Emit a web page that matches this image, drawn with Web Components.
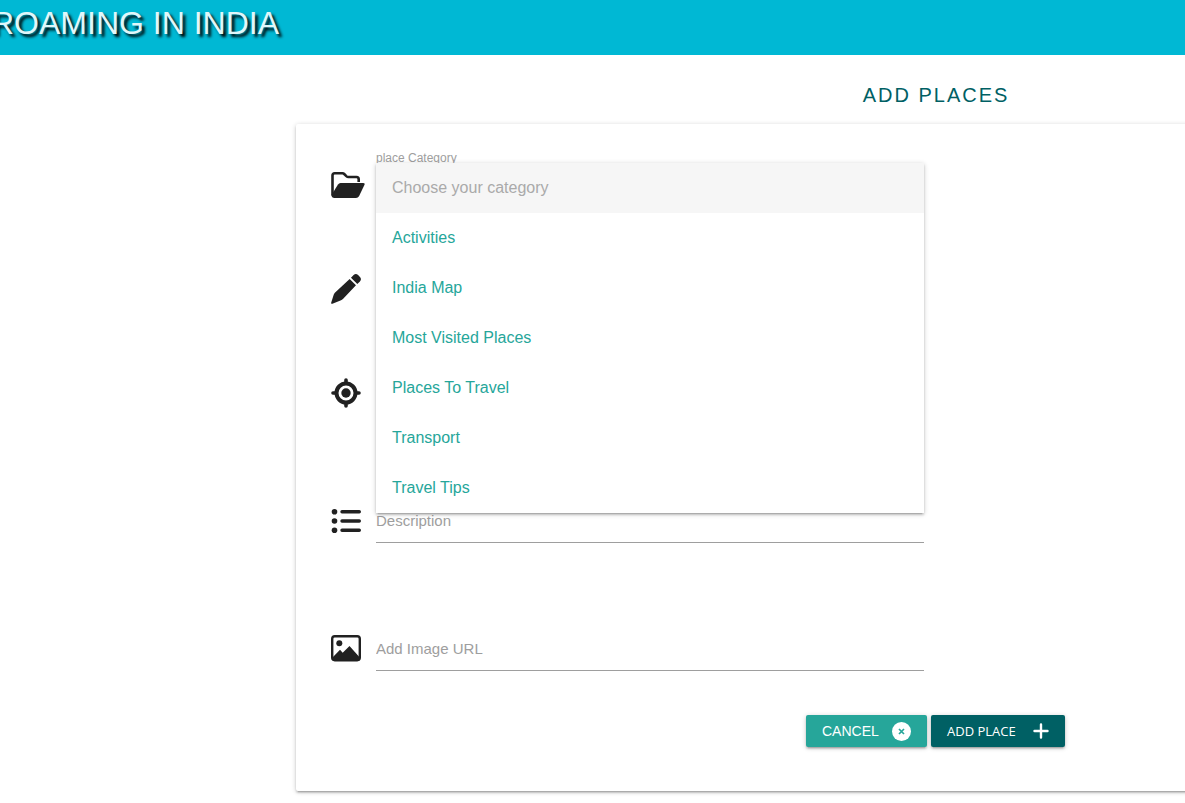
<!DOCTYPE html>
<html lang="en">
<head>
<meta charset="utf-8">
<meta name="viewport" content="width=device-width, initial-scale=1">
<title>Roaming in India - Add Places</title>
<style>
html{height:100%}
body{margin:0;min-height:100%;background:#fff;color:#212121;font-family:"Liberation Sans",Arial,sans-serif;overflow-x:hidden}
</style>
</head>
<body>
<site-header>ROAMING IN INDIA</site-header>
<place-page>
  <span slot="title">ADD PLACES</span>
  <category-field label="place Category"></category-field>
  <form-field icon="pencil" name="Place name"></form-field>
  <form-field icon="target" name="Location" class="wide"></form-field>
  <form-field icon="list" name="Description" label="Description" class="wide"></form-field>
  <form-field icon="image" name="Add Image URL" label="Add Image URL"></form-field>
  <form-actions></form-actions>
</place-page>
<script>
const icons = {
  folder: '<svg width="34" height="30" viewBox="0 0 34 30"><path d="M1.500 25.500V5.500Q1.500 3.300 3.700 3.300H11.500Q12.500 3.300 13.200 4L15.300 6.100Q16.300 7 17.500 7H25.500Q27.700 7 27.700 9.200V12" fill="none" stroke="currentColor" stroke-width="2.600"/><path d="M0.500 25L7 14.500Q8 13 9.500 13H32Q34.300 13 33.500 14.800L28 26.200Q27 28 25 28H3.500Q0.500 28 0.500 25Z" fill="currentColor"/></svg>',
  pencil: '<svg width="30" height="30" viewBox="0 0 512 512"><path fill="currentColor" d="M386 18Q424-16 462 18L494 50Q528 88 494 126L449 171L341 63ZM318 86L426 194L208 424Q190 442 162 451L24 506Q-2 516 4 488L46 352Q52 334 66 320Z"/></svg>',
  target: '<svg width="30" height="30" viewBox="0 0 30 30"><g fill="none" stroke="currentColor"><circle cx="15" cy="15" r="9.500" stroke-width="4"/><path stroke-width="3.600" stroke-linecap="round" d="M15 2V5M15 25V28M2 15H5M25 15H28"/></g><circle cx="15" cy="15" r="4.700" fill="currentColor"/></svg>',
  list: '<svg width="30" height="30" viewBox="0 0 30 30"><g fill="currentColor"><circle cx="3.500" cy="5.700" r="2.800"/><circle cx="3.500" cy="15" r="2.800"/><circle cx="3.500" cy="24.300" r="2.800"/></g><path stroke="currentColor" stroke-width="3.400" stroke-linecap="round" d="M11 5.700H28.300M11 15H28.300M11 24.300H28.300"/></svg>',
  image: '<svg width="30" height="30" viewBox="0 0 30 30"><rect x="1.200" y="2.200" width="27.600" height="24" rx="2.600" fill="none" stroke="currentColor" stroke-width="2.400"/><circle cx="8.300" cy="9.300" r="3" fill="currentColor"/><path d="M1.500 23.500L9 15.700L11.700 18.700L18.500 12L28.800 23.500V26.500H1.500Z" fill="currentColor"/></svg>'
};
const row = `
  :host{display:block;position:relative;margin-bottom:60px}
  :host(.wide){margin-bottom:84px}
  .row{display:grid;grid-template-columns:45px minmax(0,548px);height:44px;align-items:center}
  .icon svg{display:block}
`;
function mount(el, html){ el.attachShadow({mode:'open'}).innerHTML = html; }

customElements.define('site-header', class extends HTMLElement {
  connectedCallback(){ mount(this, `<style>
    :host{display:block;background:#00b8d4;height:55px;overflow:hidden}
    h1{margin:0 0 0 -9px;font-size:32px;line-height:46px;font-weight:400;color:#e0f7fa;text-shadow:3px 3px 3px #000;white-space:nowrap}
  </style><header><h1><slot></slot></h1></header>`); }
});

customElements.define('place-page', class extends HTMLElement {
  connectedCallback(){ mount(this, `<style>
    :host{display:block;margin:0 -33% 0 296px;padding-bottom:8px}
    h2{margin:0;padding:24px 0 13px;font-size:20px;line-height:32px;font-weight:400;letter-spacing:2px;text-align:center;color:#006064}
    form{display:block;box-sizing:border-box;padding:39px 35px 44px;border-radius:2px;background:#fff;
      box-shadow:0 2px 2px 0 rgba(0,0,0,.14),0 3px 1px -2px rgba(0,0,0,.12),0 1px 5px 0 rgba(0,0,0,.2)}
  </style><main><h2><slot name="title"></slot></h2><form><slot></slot></form></main>`); }
});

customElements.define('form-field', class extends HTMLElement {
  connectedCallback(){
    const label = this.getAttribute('label') || '';
    mount(this, `<style>${row}
    input{box-sizing:border-box;width:100%;height:44px;margin:0;padding:0;border:0;border-bottom:1px solid #9e9e9e;border-radius:0;outline:0;background:none;font:15px "Liberation Sans",Arial,sans-serif;color:#212121}
    input::placeholder{color:#9e9e9e;opacity:1}
  </style><div class="row"><span class="icon">${icons[this.getAttribute('icon')]}</span><input type="text" aria-label="${this.getAttribute('name')}" placeholder="${label}"></div>`); }
});

customElements.define('category-field', class extends HTMLElement {
  connectedCallback(){ mount(this, `<style>${row}
    :host{z-index:2}
    .box{position:relative;align-self:start}
    label{position:absolute;left:0;top:-13px;font-size:12px;line-height:16px;color:#9e9e9e}
    select{position:absolute;left:0;top:0;box-sizing:border-box;width:100%;height:350px;margin:0;padding:0;border:0;border-radius:0;outline:0;overflow:hidden;background:#fff;color:#26a69a;font:16px "Liberation Sans",Arial,sans-serif;
      box-shadow:0 2px 2px 0 rgba(0,0,0,.14),0 3px 1px -2px rgba(0,0,0,.12),0 1px 5px 0 rgba(0,0,0,.2)}
    option{box-sizing:border-box;height:50px;padding:16px;line-height:18px}
    option:disabled{background:#f6f6f6;color:#aaa}
  </style><div class="row"><span class="icon">${icons.folder}</span><div class="box">
    <label for="category">${this.getAttribute('label')}</label>
    <select id="category" size="7">
      <option disabled>Choose your category</option>
      <option>Activities</option><option>India Map</option><option>Most Visited Places</option>
      <option>Places To Travel</option><option>Transport</option><option>Travel Tips</option>
    </select></div></div>`); }
});

customElements.define('form-actions', class extends HTMLElement {
  connectedCallback(){ mount(this, `<style>
    :host{display:flex;gap:4px;margin-top:-16px;padding-left:475px}
    button{display:flex;align-items:center;justify-content:space-between;box-sizing:border-box;height:32px;margin:0;padding:0 16px;border:0;border-radius:2px;color:#fff;white-space:nowrap;
      box-shadow:0 2px 2px 0 rgba(0,0,0,.14),0 3px 1px -2px rgba(0,0,0,.12),0 1px 5px 0 rgba(0,0,0,.2)}
    .cancel{width:121px;background:#26a69a;font:14px "Liberation Sans",Arial,sans-serif}
    .add{width:134px;background:#006064;font:13px "Open Sans","Noto Sans",sans-serif}
    svg{display:block}
  </style>
  <button type="button" class="cancel">CANCEL<svg width="19" height="19" viewBox="0 0 19 19"><circle cx="9.500" cy="9.500" r="9.500" fill="#fff"/><path d="M7 7L12 12M12 7L7 12" stroke="#26a69a" stroke-width="1.700"/></svg></button>
  <button type="submit" class="add">ADD PLACE<svg width="16" height="16" viewBox="0 0 16 16"><path d="M8 1.500V14.500M1.500 8H14.500" stroke="#fff" stroke-width="2.400" stroke-linecap="round"/></svg></button>`); }
});
</script>
</body>
</html>
